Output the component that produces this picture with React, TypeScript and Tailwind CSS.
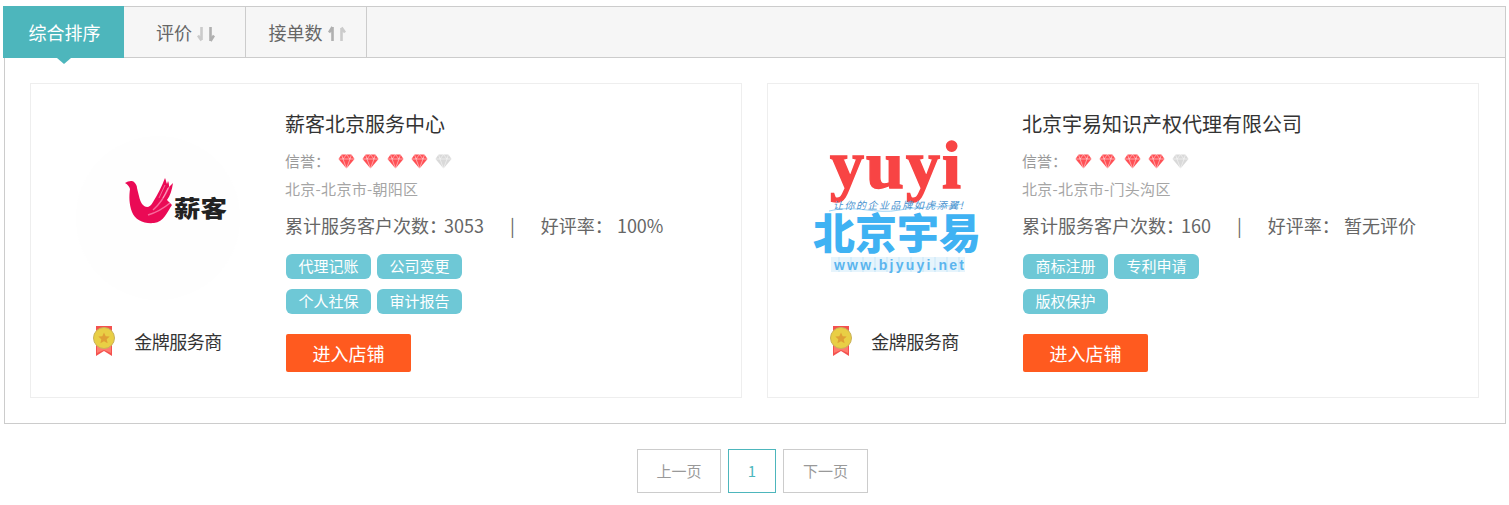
import React from 'react';

const FONT = '"Noto Sans CJK SC", "Liberation Sans", sans-serif';

// Two arrows side by side, the darker one marks the current sort direction
const SortIcon = ({ flip }: { flip?: boolean }) => (
  <svg width="18" height="16" viewBox="0 0 18 16" className="mt-[3px] ml-[5px]">
    <g fill="none" strokeWidth="2.6" className={flip ? 'origin-center rotate-180' : ''}>
      <path d="M4.500 1v13M1 9.500l3.500 5" stroke="#cbcbcb" />
      <path d="M13.500 1v14M13.500 15l3.500-5.500" stroke="#b0b0b0" />
    </g>
  </svg>
);

const Diamond = ({ on }: { on: boolean }) => (
  <svg width="17" height="15" viewBox="0 0 17 15" className="mr-[7.3px]">
    <path d="M3.500 0.500h10l3 4.500-8 9.500-8-9.500z" fill={on ? '#ff5055' : '#d9d9d9'} />
    <path d="M0.500 5h16M5 5l3.500 9.500L12 5M3.500 0.500L5 5l3.500-4.500L12 5l1.500-4.500" fill="none" stroke="#fff" strokeOpacity="0.6" strokeWidth="0.8" />
  </svg>
);

const Medal = () => (
  <svg width="24" height="31" viewBox="0 0 24 31">
    <path d="M4 0h16v30l-8-5-8 5z" fill="#f4514f" />
    <path d="M5 13h14v14l-7-3-7 3z" fill="#ff7b6e" />
    <circle cx="12" cy="12" r="10.500" fill="#e9cf45" stroke="#c9b25a" strokeWidth="1" />
    <path d="M12 6.500l1.700 3.700 4 .4-3 2.700.9 4-3.600-2.100-3.600 2.100.9-4-3-2.700 4-.4z" fill="#e0a035" />
  </svg>
);

const XinkeLogo = () => (
  <svg width="180" height="160" viewBox="0 0 180 160" className="overflow-visible">
    <circle cx="90" cy="78" r="82" fill="#fefefe" />
    <path
      d="M57 43C60 41 64 40 66 42C68 44 69 46 69 48C71 56 72 62 75 65C78 68 82 68 85 62C90 54 94 46 97 38C98 40 98 42 99 44L100 41C101 43 101 45 101 47L105 43C104 50 102 56 99 60L104 65C99 72 96 82 86 83C76 84 67 80 64 72C61 64 61 56 62 49C61 46 60 45 57 43Z"
      fill="#ea0a55"
    />
    <path d="M85 70C92 64 97 56 101 47M80 75C90 72 96 68 102 63" fill="none" stroke="#f86a9c" strokeWidth="1.500" />
    <path d="M97 45L91 58M100 48L95 58" fill="none" stroke="#fff" strokeOpacity="0.5" strokeWidth="0.800" />
    <text x="106" y="77" fontSize="23" fontWeight="900" fill="#222" fontFamily={FONT} textLength="53" lengthAdjust="spacingAndGlyphs">薪客</text>
  </svg>
);

const YuyiLogo = () => (
  <svg width="180" height="160" viewBox="0 0 180 160" className="overflow-visible">
    <text x="25" y="48" fontSize="68" fontWeight="700" fill="#f84444" stroke="#f84444" strokeWidth="1.500" fontFamily='"Liberation Serif", serif' textLength="131">yuyi</text>
    <path d="M24 71C50 64 70 75 95 70C115 66 135 68 158 64" fill="none" stroke="#9fd4f5" strokeWidth="1" />
    <text x="28" y="69" fontSize="10" fontStyle="italic" fill="#4a93cf" fontFamily={FONT} textLength="130">让你的企业品牌如虎添翼!</text>
    <text x="8" y="109" fontSize="42" fontWeight="900" fill="#3fb2f3" fontFamily={FONT} textLength="168">北京宇易</text>
    <rect x="26" y="117" width="134" height="15" fill="#e6f4fc" />
    {[34, 46, 58, 70, 82, 94, 106, 118, 130, 142, 154].map((x) => (
      <path key={x} d={`M${x} 117v15`} stroke="#c6e6f8" strokeWidth="1" />
    ))}
    <text x="29" y="130" fontSize="14" fontWeight="700" fill="#5bb5ee" fontFamily='"Liberation Sans", sans-serif' textLength="130">www.bjyuyi.net</text>
  </svg>
);

const shops = [
  {
    name: '薪客北京服务中心',
    area: '北京-北京市-朝阳区',
    count: '3053',
    rate: '100%',
    tags: [['代理记账', '公司变更'], ['个人社保', '审计报告']],
    logo: <XinkeLogo />,
  },
  {
    name: '北京宇易知识产权代理有限公司',
    area: '北京-北京市-门头沟区',
    count: '160',
    rate: '暂无评价',
    tags: [['商标注册', '专利申请'], ['版权保护']],
    logo: <YuyiLogo />,
  },
];

const ShopCard = ({ shop }: { shop: (typeof shops)[number] }) => (
  <div className="flex h-[315px] w-[712px] border border-[#eeeeee]">
    {/* Logo and grade */}
    <div className="flex w-[254px] flex-col items-center pt-[56px]">
      <div className="h-[160px] w-[180px]">{shop.logo}</div>
      <div className="mt-[26px] -ml-[2px] flex h-[31px] items-center">
        <Medal />
        <span className="ml-[18px] text-[18px] leading-[31px] tracking-[-0.5px] text-[#333333]">金牌服务商</span>
      </div>
    </div>

    {/* Details */}
    <div className="flex-1 pt-[26px]">
      <h3 className="text-[20px] leading-[28px] font-normal text-[#333333]">{shop.name}</h3>
      <div className="mt-[13px] flex h-[20px] items-center text-[15px] text-[#999999]">
        <span className="w-[53px]">信誉：</span>
        {[true, true, true, true, false].map((on, i) => (
          <Diamond key={i} on={on} />
        ))}
      </div>
      <div className="mt-[8px] text-[15px] leading-[20px] tracking-[0.3px] text-[#a5a5a5]">{shop.area}</div>
      <div className="mt-[13px] flex h-[26px] items-center text-[18px] whitespace-pre text-[#666666]">
        <span>累计服务客户次数<span className="-mr-[3px]">：</span>{shop.count}</span>
        <span className="mx-[26px]">|</span>
        <span>好评率： {shop.rate}</span>
      </div>
      <div className="mt-[16px] ml-[1px] flex h-[60px] flex-col gap-[10px]">
        {shop.tags.map((row, i) => (
          <div key={i} className="flex gap-[6px]">
            {row.map((tag) => (
              <span key={tag} className="flex h-[25px] w-[85px] items-center justify-center rounded-[6px] bg-[#6ec8d6] text-[15px] text-white">
                {tag}
              </span>
            ))}
          </div>
        ))}
      </div>
      <button className="mt-[20px] ml-[1px] h-[38px] w-[125px] rounded-[2px] bg-[#ff5a1f] text-[18px] text-white">进入店铺</button>
    </div>
  </div>
);

export default function App() {
  return (
    <div className="h-[505px] w-[1509px] overflow-hidden bg-white pt-[6px] pl-[4px]" style={{ fontFamily: FONT }}>
      <div className="w-[1502px] border-x border-b border-[#cccccc]">
        {/* Sort tabs */}
        <div className="flex h-[52px] border-t border-b border-[#cccccc] bg-[#f6f6f6] text-[18px] text-[#666666]">
          <div className="relative -mt-[1px] -ml-[2px] flex h-[52px] w-[121px] items-center justify-center bg-[#4db6bc] pl-[2px] text-white">
            综合排序
            <span className="absolute top-full left-[54px] h-0 w-0 border-x-[7px] border-t-[6px] border-x-transparent border-t-[#4db6bc]" />
          </div>
          <div className="flex w-[122px] items-center justify-center border-r border-[#cccccc] pl-[2px]">
            评价
            <SortIcon />
          </div>
          <div className="flex w-[121px] items-center justify-center border-r border-[#cccccc] pl-[2px]">
            接单数
            <SortIcon flip />
          </div>
        </div>

        <div className="flex gap-[25px] p-[25px]">
          {shops.map((shop) => (
            <ShopCard key={shop.name} shop={shop} />
          ))}
        </div>
      </div>

      {/* Pagination */}
      <div className="mt-[25px] flex justify-center gap-[7px] pr-[8px] text-[15px] text-[#999999]">
        <span className="flex h-[44px] w-[84px] items-center justify-center border border-[#cccccc]">上一页</span>
        <span className="flex h-[44px] w-[48px] items-center justify-center border border-[#4db6bc] text-[#4db6bc]">1</span>
        <span className="flex h-[44px] w-[85px] items-center justify-center border border-[#cccccc]">下一页</span>
      </div>
    </div>
  );
}
